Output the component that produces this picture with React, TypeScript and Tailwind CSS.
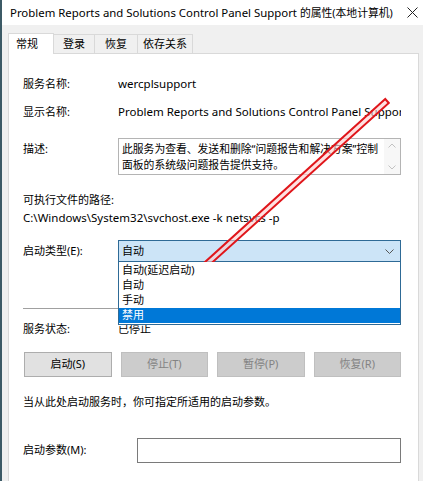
import React from 'react';

const font = { fontFamily: '"Noto Sans", "Noto Sans CJK SC", sans-serif' };

const Row: React.FC<{ label: string; children?: React.ReactNode; className?: string }> = ({ label, children, className }) => (
  <div className={'flex items-center h-[18px] ' + (className || '')}>
    <div className="w-[95px] shrink-0 text-[11px]">{label}</div>
    <div className="flex-1 whitespace-nowrap overflow-hidden">{children}</div>
  </div>
);

const Btn: React.FC<{ label: string; disabled?: boolean }> = ({ label, disabled }) => (
  <div
    className={
      'h-[25px] flex items-center justify-center border text-[11px] ' +
      (disabled ? 'bg-[#cccccc] border-[#bfbfbf] text-[#838383]' : 'bg-[#e1e1e1] border-[#adadad] text-black')
    }
  >
    {label}
  </div>
);

const Arrow = () => (
  <svg className="absolute left-0 top-0 pointer-events-none" width="423" height="481">
    <polygon
      points="385.2,99.0 174.6,289.6 166.4,280.8 153.5,312.5 186.0,302.6 177.8,293.6 388.8,103.0"
      fill="rgba(255,205,205,0.6)"
      stroke="#e0161b"
      strokeWidth="2"
      strokeLinejoin="miter"
    />
  </svg>
);

export default function App() {
  return (
    <div className="relative w-[423px] h-[481px] overflow-hidden bg-[#f0f0f0] text-[11.5px] text-black" style={font}>
      <div className="absolute left-0 top-0 w-[2px] h-full bg-[#3c5a66]" />
      {/* title bar */}
      <div className="h-[25px] bg-white flex items-center pl-[10px] pr-[5px]">
        <div className="flex-1 whitespace-nowrap text-[11.4px]">
          Problem Reports and Solutions Control Panel Support <span className="text-[10.8px]">的属性(本地计算机)</span>
        </div>
        <svg width="11" height="11" viewBox="0 0 11 11">
          <path d="M0.5 0.5 L10.5 10.5 M10.5 0.5 L0.5 10.5" stroke="#222" strokeWidth="1" />
        </svg>
      </div>

      {/* tabs */}
      <div className="flex items-end h-[28px] pl-[8px] text-[11px]">
        <div className="h-[21px] w-[46px] bg-white border border-[#d9d9d9] border-b-0 pl-[7px] pt-[2px] relative z-10 -mb-px">常规</div>
        <div className="h-[19px] w-[41px] border-t border-r border-[#d9d9d9] flex items-center justify-center">登录</div>
        <div className="h-[19px] w-[43px] border-t border-r border-[#d9d9d9] flex items-center justify-center">恢复</div>
        <div className="h-[19px] w-[55px] border-t border-r border-[#d9d9d9] flex items-center justify-center">依存关系</div>
      </div>

      {/* panel */}
      <div className="ml-[8px] w-[411px] h-[440px] bg-white border border-[#d9d9d9] pl-[14px] pr-[17px] pt-[20px] relative">
        <Row label="服务名称:" className="h-[20px]">wercplsupport</Row>
        <Row label="显示名称:" className="mt-[8px] h-[20px]">Problem Reports and Solutions Control Panel Support</Row>

        <div className="flex items-start mt-[16px]">
          <div className="w-[95px] shrink-0 pt-[3px] leading-[16px] text-[11px]">描述:</div>
          <div className="flex-1 h-[37px] border border-[#b4b4b4] flex">
            <div className="flex-1 pl-[3px] pt-[2px] leading-[15.5px] text-[10.8px]">
              此服务为查看、发送和删除“问题报告和解决方案”控制面板的系统级问题报告提供支持。
            </div>
            <div className="w-[16px] flex flex-col items-center justify-between py-[4px] bg-[#f7f7f7]">
              <svg width="8" height="5" viewBox="0 0 8 5"><path d="M0.5 4.5 L4 1 L7.5 4.5" fill="none" stroke="#c2c2c2" /></svg>
              <svg width="8" height="5" viewBox="0 0 8 5"><path d="M0.5 0.5 L4 4 L7.5 0.5" fill="none" stroke="#c2c2c2" /></svg>
            </div>
          </div>
        </div>

        <div className="mt-[16px] h-[18px] flex items-center text-[11px]">可执行文件的路径:</div>
        <div className="h-[18px] flex items-center whitespace-nowrap">C:\Windows\System32\svchost.exe -k netsvcs -p</div>

        <div className="flex items-center mt-[13px] text-[11px]">
          <div className="w-[95px] shrink-0">启动类型(E):</div>
          <div className="flex-1 relative">
            <div className="h-[22px] bg-[#cce4f7] border border-[#2e6a96] flex items-center pl-[3px] pr-[6px]">
              <div className="flex-1">自动</div>
              <svg width="9" height="5" viewBox="0 0 9 5"><path d="M0.5 0.5 L4.5 4.5 L8.5 0.5" fill="none" stroke="#555" /></svg>
            </div>
            <div className="absolute left-0 right-0 top-full z-20 bg-white border border-[#2e6a96] border-t-0 flex flex-col pb-px">
              <div className="pl-[3px] h-[16px] flex items-center">自动(延迟启动)</div>
              <div className="pl-[3px] h-[15px] flex items-center">自动</div>
              <div className="pl-[3px] h-[15px] flex items-center">手动</div>
              <div className="pl-[3px] h-[15px] flex items-center bg-[#0078d7] text-white">禁用</div>
            </div>
          </div>
        </div>

        <div className="mt-[46px] h-px bg-[#a0a0a0]" />

        <Row label="服务状态:" className="mt-[11px]"><span className="text-[11px]">已停止</span></Row>

        <div className="grid grid-cols-4 gap-[9px] mt-[14px] ml-px">
          <Btn label="启动(S)" />
          <Btn label="停止(T)" disabled />
          <Btn label="暂停(P)" disabled />
          <Btn label="恢复(R)" disabled />
        </div>

        <div className="mt-[16px] h-[18px] flex items-center text-[11px]">当从此处启动服务时，你可指定所适用的启动参数。</div>

        <div className="flex items-center mt-[27px] text-[11px]">
          <div className="w-[114px] shrink-0">启动参数(M):</div>
          <div className="flex-1 h-[25px] border border-[#7a7a7a]" />
        </div>
      </div>

      <Arrow />
    </div>
  );
}
